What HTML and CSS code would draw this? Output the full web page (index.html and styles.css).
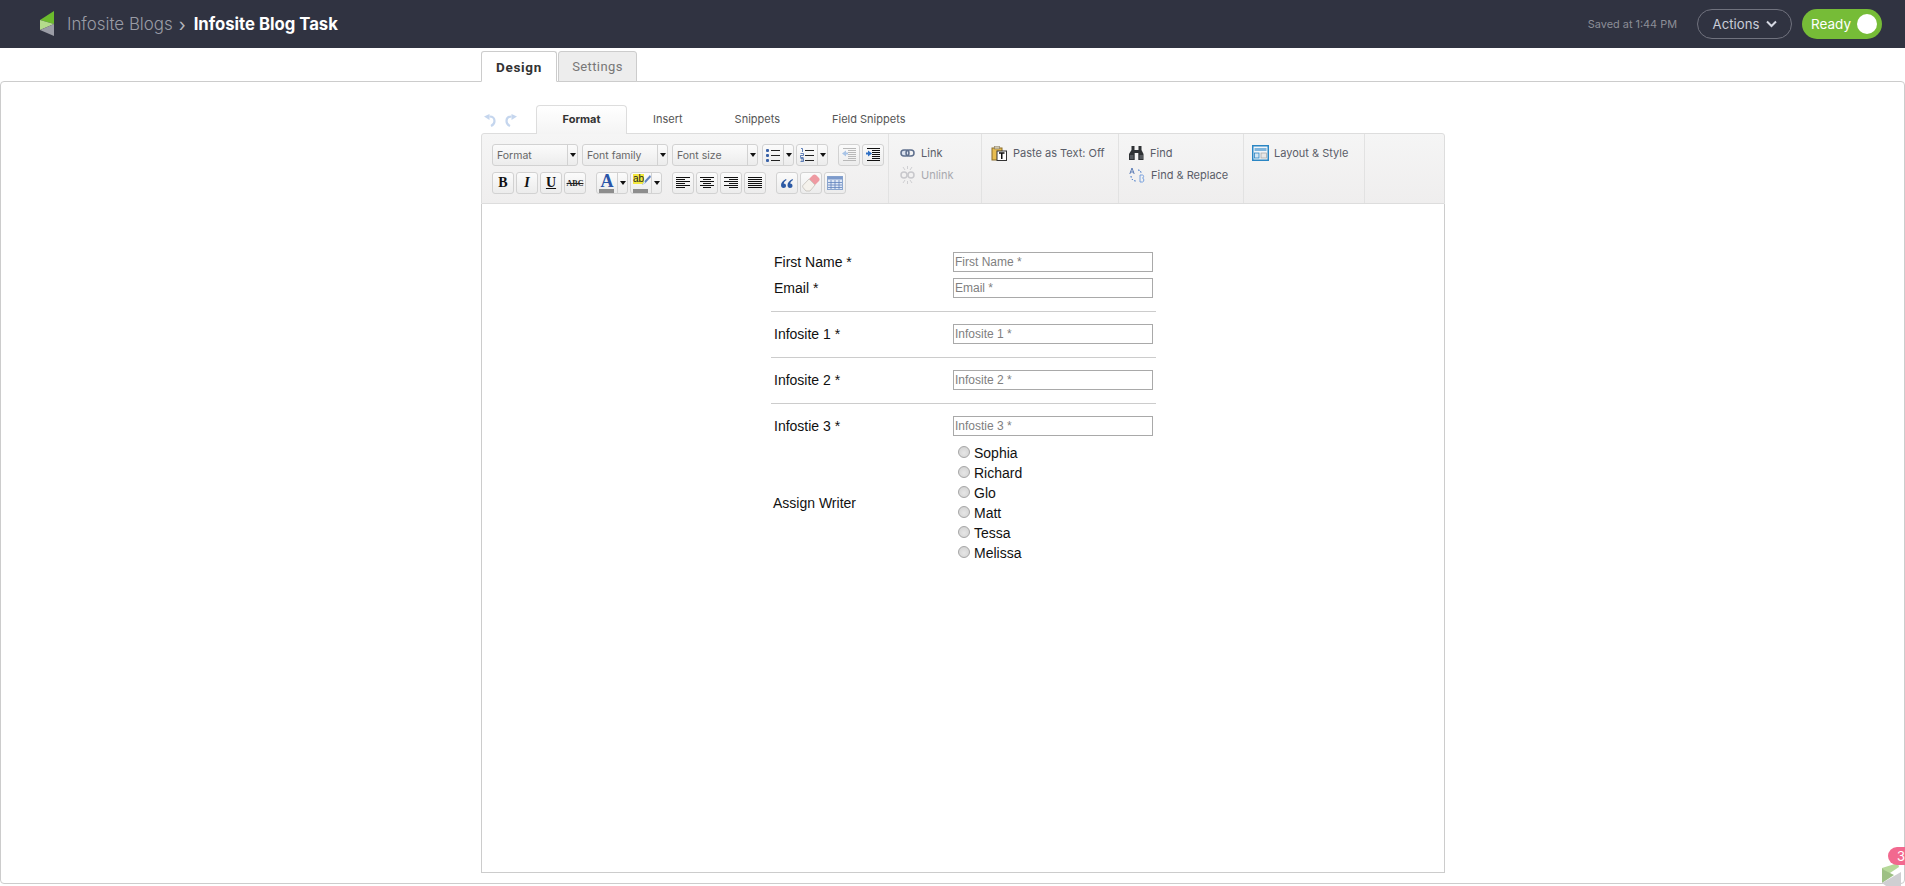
FILE: index.html
```html
<!DOCTYPE html>
<html lang="en">
<head>
<meta charset="utf-8">
<title>Infosite Blog Task</title>
<link rel="stylesheet" href="styles.css">
</head>
<body>
<header class="topbar">
  <svg class="logo" width="15" height="26" viewBox="0 0 15 26"><polygon points="14,0 14,13 0,9" fill="#6cbb2d"/><polygon points="0,9 14,13 0,19" fill="#b4dc8c"/><polygon points="0,19 14,13 14,25" fill="#9b9da6"/></svg>
  <span class="crumb">Infosite Blogs</span>
  <span class="crumb-sep">›</span>
  <span class="crumb-title">Infosite Blog Task</span>
  <span class="saved">Saved at 1:44 PM</span>
  <button class="actions">Actions
    <svg width="11" height="8" viewBox="0 0 11 8"><path d="M1 1.500l4.500 4.500L10 1.500" fill="none" stroke="#d5d8e2" stroke-width="2"/></svg>
  </button>
  <div class="ready"><span>Ready</span><i class="ready-knob"></i></div>
</header>

<nav class="page-tabs">
  <div class="page-tab active">Design</div>
  <div class="page-tab">Settings</div>
</nav>

<main class="frame">
  <div class="editor-wrap">
    <div class="ribbon-tabs">
      <div class="history">
        <svg width="13" height="13" viewBox="0 0 13 13"><path d="M6.500 2.500C9.500 2.500 11.500 4.300 11.500 7c0 2.200-1.400 4-3.500 5" fill="none" stroke="#c5d6ee" stroke-width="2.200"/><path d="M1 2.500L6.500 0v6z" fill="#c5d6ee"/></svg>
        <svg width="13" height="13" viewBox="0 0 13 13"><path d="M6.500 2.500C3.500 2.500 1.500 4.300 1.500 7c0 2.200 1.400 4 3.500 5" fill="none" stroke="#c5d6ee" stroke-width="2.200"/><path d="M12 2.500L6.500 0v6z" fill="#c5d6ee"/></svg>
      </div>
      <div class="ribbon-tab active">Format</div>
      <div class="ribbon-tab insert">Insert</div>
      <div class="ribbon-tab snippets">Snippets</div>
      <div class="ribbon-tab fields">Field Snippets</div>
    </div>

    <div class="toolbar">
      <section class="tb-group tb-format">
        <div class="tb-row">
          <div class="tb-select"><span>Format</span><i class="tb-drop"><b class="caret"></b></i></div>
          <div class="tb-select"><span>Font family</span><i class="tb-drop"><b class="caret"></b></i></div>
          <div class="tb-select"><span>Font size</span><i class="tb-drop"><b class="caret"></b></i></div>
          <div class="tb-split">
            <i class="tb-main"><svg width="14" height="14" viewBox="0 0 14 14"><g fill="#3a62a8"><rect x="0" y="1" width="3" height="3" rx="1"/><rect x="0" y="6" width="3" height="3" rx="1"/><rect x="0" y="11" width="3" height="3" rx="1"/></g><path d="M5 2.500h9M5 7.500h9M5 12.500h9" stroke="#222"/></svg></i>
            <i class="tb-drop"><b class="caret"></b></i>
          </div>
          <div class="tb-split">
            <i class="tb-main"><svg width="14" height="14" viewBox="0 0 14 14"><path d="M1 .5h1.500V4M.5 5.500h3v2h-3v2h3M.5 10.500h3v3h-3M1 12h2" fill="none" stroke="#3a62a8" stroke-width=".8"/><path d="M5 2.500h9M5 7.500h9M5 12.500h9" stroke="#222"/></svg></i>
            <i class="tb-drop"><b class="caret"></b></i>
          </div>
          <div class="tb-btn gap"><svg width="14" height="14" viewBox="0 0 14 14"><path d="M1 .5h13M6 2.500h8M6 4.500h8M6 6.500h8M6 8.500h8M6 10.500h8M1 12.500h13" stroke="#b8b8b8"/><path d="M0 5.500L4 2.500v2h2v2H4v2z" fill="#a9c4e6"/></svg></div>
          <div class="tb-btn"><svg width="14" height="14" viewBox="0 0 14 14"><path d="M1 .5h13M6 2.500h8M6 4.500h8M6 6.500h8M6 8.500h8M6 10.500h8M1 12.500h13" stroke="#111"/><path d="M6 5.500L2 2.500v2H0v2h2v2z" fill="#2f6fc4"/></svg></div>
        </div>
        <div class="tb-row">
          <div class="tb-btn glyph-b">B</div>
          <div class="tb-btn glyph-i">I</div>
          <div class="tb-btn glyph-u">U</div>
          <div class="tb-btn glyph-s">ABC</div>
          <div class="tb-split gap">
            <i class="tb-main color"><span class="glyph-a">A</span><u class="swatch"></u></i>
            <i class="tb-drop"><b class="caret"></b></i>
          </div>
          <div class="tb-split">
            <i class="tb-main color"><span class="glyph-h">ab</span><svg class="pen" width="10" height="12" viewBox="0 0 10 12"><path d="M9 1L3.500 7 1 11l3.500-2L10 3z" fill="#5f84c2"/><path d="M3.500 7L1 11l3.500-2z" fill="#d9e4f3"/></svg><u class="swatch"></u></i>
            <i class="tb-drop"><b class="caret"></b></i>
          </div>
          <div class="tb-btn gap"><svg width="14" height="12" viewBox="0 0 14 12"><path d="M0 .5h14M0 2.500h9M0 4.500h14M0 6.500h9M0 8.500h14M0 10.500h9" stroke="#111"/></svg></div>
          <div class="tb-btn"><svg width="14" height="12" viewBox="0 0 14 12"><path d="M0 .5h14M3 2.500h8M0 4.500h14M3 6.500h8M0 8.500h14M3 10.500h8" stroke="#111"/></svg></div>
          <div class="tb-btn"><svg width="14" height="12" viewBox="0 0 14 12"><path d="M0 .5h14M5 2.500h9M0 4.500h14M5 6.500h9M0 8.500h14M5 10.500h9" stroke="#111"/></svg></div>
          <div class="tb-btn"><svg width="14" height="12" viewBox="0 0 14 12"><path d="M0 .5h14M0 2.500h14M0 4.500h14M0 6.500h14M0 8.500h14M0 10.500h14" stroke="#111"/></svg></div>
          <div class="tb-btn gap"><svg width="12" height="9" viewBox="0 0 12 9"><path d="M5 0C2 1.500 0 3.500 0 6c0 1.700 1 3 2.500 3S5 8 5 6.700 4 4.500 2.700 4.500C3 3 4 1.800 5.500 1zM11.500 0C8.500 1.500 6.500 3.500 6.500 6c0 1.700 1 3 2.500 3s2.500-1 2.500-2.300S10.500 4.500 9.200 4.500C9.500 3 10.500 1.800 12 1z" fill="#2c5aa5"/></svg></div>
          <div class="tb-btn"><svg width="18" height="18" viewBox="0 0 18 18"><path d="M11 1c1-.8 2-.8 3 0l3 3c.8 1 .8 2 0 3l-4 4-6-6z" fill="#ee9aa2"/><path d="M7 5l6 6-5 6H4L1 13.500c-.5-.8-.5-1.500 0-2.200z" fill="#f5f2ec" stroke="#bdb9b2" stroke-width=".7"/></svg></div>
          <div class="tb-btn"><svg width="16" height="14" viewBox="0 0 16 14"><rect x=".5" y=".5" width="15" height="13" fill="#dfe8f6" stroke="#8ba6cf"/><rect x=".5" y=".5" width="15" height="3" fill="#7d9acb"/><path d="M4 4v9M8 4v9M12 4v9M1 6.500h14M1 9h14M1 11.500h14" stroke="#5f82bd" stroke-width=".8"/></svg></div>
        </div>
      </section>

      <section class="tb-group tb-links">
        <div class="tb-item">
          <svg width="15" height="8" viewBox="0 0 15 8"><rect x="1" y="1" width="8" height="6" rx="3" fill="#dbe2ee" stroke="#5e6f8d" stroke-width="1.500"/><rect x="6" y="1" width="8" height="6" rx="3" fill="none" stroke="#5e6f8d" stroke-width="1.500"/></svg>
          <span>Link</span>
        </div>
        <div class="tb-item off">
          <svg width="15" height="18" viewBox="0 0 15 18"><rect x="1" y="6" width="6" height="6" rx="3" fill="none" stroke="#c8c8cc" stroke-width="1.500"/><rect x="8" y="6" width="6" height="6" rx="3" fill="none" stroke="#c8c8cc" stroke-width="1.500"/><path d="M3 1l2 3M12 1l-2 3M7.500 0v3M3 17l2-3M12 17l-2-3M7.500 18v-3" stroke="#cfcfd2"/></svg>
          <span>Unlink</span>
        </div>
      </section>

      <section class="tb-group tb-paste">
        <div class="tb-item">
          <svg width="16" height="15" viewBox="0 0 16 15"><rect x="1" y="2" width="10" height="12" fill="#e8bd50" stroke="#8a6d2a"/><rect x="3.500" y="0" width="5" height="3" fill="#cfc6ad" stroke="#807560" stroke-width=".6"/><rect x="6" y="5" width="9.500" height="9.500" fill="#fff" stroke="#333"/><path d="M8 7h5.500M10.750 7v6" stroke="#111" stroke-width="1.500"/></svg>
          <span>Paste as Text: Off</span>
        </div>
      </section>

      <section class="tb-group tb-find">
        <div class="tb-item">
          <svg width="15" height="16" viewBox="0 0 15 16"><path d="M2.500 1h3v4h4V1h3v4l2 4v6H9.300V8H5.700v7H0V9l2.500-4z" fill="#2f3235"/><path d="M1 10h3.500v4H1zM10.500 10H14v4h-3.500z" fill="#55595e"/></svg>
          <span>Find</span>
        </div>
        <div class="tb-item">
          <svg width="16" height="16" viewBox="0 0 16 16"><path d="M3 1L.8 7M3 1l2.200 6M1.500 5h3" stroke="#3a62a8" stroke-width=".8" fill="none"/><path d="M2 9c0 3 2 5 5 5M9 3c2 0 3 1 3 3" fill="none" stroke="#3d74c7" stroke-dasharray="1.500 1.500"/><path d="M11 8h2.500c1.500 0 1.500 3 0 3 1.800 0 1.800 4 0 4H11z" fill="none" stroke="#6b98dc" stroke-width=".9"/></svg>
          <span>Find &amp; Replace</span>
        </div>
      </section>

      <section class="tb-group tb-layout">
        <div class="tb-item">
          <svg width="17" height="16" viewBox="0 0 17 16"><rect x=".75" y=".75" width="15.500" height="14.500" fill="#f2f5f8" stroke="#2a86c4" stroke-width="1.500"/><rect x="2.500" y="3" width="12" height="3" fill="#7fb5dd"/><rect x="2.500" y="8" width="4.500" height="5" fill="#d3e5f3" stroke="#2a86c4" stroke-width=".8"/><rect x="9" y="8" width="5.500" height="5" fill="#e6e6e6" stroke="#aaa" stroke-width=".8"/></svg>
          <span>Layout &amp; Style</span>
        </div>
      </section>
    </div>

    <div class="editor">
      <form class="blog-form">
        <div class="form-row"><label>First Name *</label><input placeholder="First Name *"></div>
        <div class="form-row tight"><label>Email *</label><input placeholder="Email *"></div>
        <hr>
        <div class="form-row"><label>Infosite 1 *</label><input placeholder="Infosite 1 *"></div>
        <hr>
        <div class="form-row"><label>Infosite 2 *</label><input placeholder="Infosite 2 *"></div>
        <hr>
        <div class="form-row"><label>Infostie 3 *</label><input placeholder="Infostie 3 *"></div>
        <div class="form-row radios">
          <label class="nudge">Assign Writer</label>
          <div class="radio-list">
            <div class="radio"><input type="radio" name="writer"><span>Sophia</span></div>
            <div class="radio"><input type="radio" name="writer"><span>Richard</span></div>
            <div class="radio"><input type="radio" name="writer"><span>Glo</span></div>
            <div class="radio"><input type="radio" name="writer"><span>Matt</span></div>
            <div class="radio"><input type="radio" name="writer"><span>Tessa</span></div>
            <div class="radio"><input type="radio" name="writer"><span>Melissa</span></div>
          </div>
        </div>
      </form>
    </div>
  </div>
</main>

<div class="helper">
  <svg class="helper-logo" width="20" height="24" viewBox="0 0 20 24"><polygon points="0,6 16,1 17,5 2,15" fill="#b6d99a"/><polygon points="0,6 0,21 12,13 2,8" fill="#9dc084"/><polygon points="0,21 19,10 19,24 4,24" fill="#cfcfd2"/></svg>
  <div class="helper-badge">3</div>
</div>
</body>
</html>
```

FILE: styles.css
```css
* { box-sizing: border-box; }
html, body { margin: 0; height: 886px; overflow: hidden; background: #fff; }
body { font-family: "Inter", "Liberation Sans", sans-serif; color: #222; position: relative; }
button { font: inherit; }
i, u, b { font-style: normal; text-decoration: none; }

/* top bar */
.topbar { height: 48px; background: #303341; display: flex; align-items: center; padding: 0 23px 0 40px; }
.logo { margin-right: 12px; flex: none; }
.crumb { font-size: 16.900px; font-weight: 300; color: #9a9ca5; }
.crumb-sep { font-size: 18px; color: #b5b7bd; margin: 0 8px 0 6px; }
.crumb-title { font-size: 16.700px; font-weight: 700; color: #fff; }
.saved { margin-left: auto; font-size: 10.900px; color: #8c8e97; }
.actions { margin-left: 20px; width: 95px; height: 30px; border-radius: 15px; border: 1px solid #70727e; background: transparent; color: #c9ccd8; font-size: 13.200px; display: flex; align-items: center; justify-content: center; gap: 7px; padding: 0 0 0 1px; }
.ready { margin-left: 10px; width: 80px; height: 30px; border-radius: 15px; background: #76bc37; color: #fff; font-size: 13.500px; display: flex; align-items: center; justify-content: space-between; padding: 0 5px 0 9px; }
.ready-knob { width: 20px; height: 20px; border-radius: 50%; background: #fff; }

/* page tabs */
.page-tabs { display: flex; gap: 1px; height: 34px; padding: 3px 0 0 481px; position: relative; z-index: 1; margin-bottom: -1px; }
.page-tab { width: 79px; height: 31px; border: 1px solid #ccc; border-radius: 3px 3px 0 0; background: #ededed; font: 13px "Roboto", sans-serif; letter-spacing: .4px; color: #777; display: flex; align-items: center; justify-content: center; }
.page-tab.active { width: 76px; background: #fff; border-bottom-color: #fff; color: #333; font-weight: 700; font-size: 13.500px; letter-spacing: .7px; height: 31px; }

/* frame */
.frame { height: 803px; border: 1px solid #ccc; border-radius: 4px; padding-left: 480px; }
.editor-wrap { width: 964px; }
.ribbon-tabs { height: 52px; display: flex; align-items: flex-end; font-size: 11px; color: #555; position: relative; z-index: 1; margin-bottom: -1px; }
.history { width: 55px; height: 28px; display: flex; align-items: center; gap: 9px; padding-left: 2px; }
.ribbon-tab { height: 28px; display: flex; align-items: center; padding-bottom: 3px; }
.ribbon-tab.active { width: 91px; height: 29px; justify-content: center; background: linear-gradient(#fff, #f4f4f4); border: 1px solid #ddd; border-bottom: 0; border-radius: 4px 4px 0 0; font-weight: 700; color: #333; }
.insert { margin-left: 26px; }
.snippets { margin-left: 52px; }
.fields { margin-left: 52px; }

/* toolbar */
.toolbar { height: 71px; display: flex; background: linear-gradient(#f5f5f5, #efeeee); border: 1px solid #ddd; border-radius: 3px 3px 0 0; font-size: 11px; color: #5a5d68; }
.tb-group { border-right: 1px solid #e2e2e2; flex: none; padding-top: 8px; }
.tb-format { width: 407px; padding: 10px 0 0 10px; }
.tb-links { width: 93px; padding-left: 11px; }
.tb-paste { width: 137px; padding-left: 9px; }
.tb-find { width: 125px; padding-left: 10px; }
.tb-layout { width: 121px; padding-left: 8px; }
.tb-layout .tb-item { gap: 5px; }
.tb-row { display: flex; height: 22px; margin-bottom: 6px; gap: 2px; }
.tb-select, .tb-split, .tb-btn { height: 22px; border: 1px solid #d2d2d2; border-radius: 3px; background: linear-gradient(#fbfbfb, #ececec); display: flex; align-items: center; flex: none; }
.tb-select { width: 86px; margin-right: 2px; }
.tb-select span { flex: 1; padding-left: 4px; color: #666; font-size: 10.500px; }
.tb-drop { width: 10px; height: 100%; border-left: 1px solid #d2d2d2; display: flex; align-items: center; justify-content: center; flex: none; }
.caret { border: 3px solid transparent; border-top: 4px solid #111; border-bottom: 0; }
.tb-split { width: 32px; }
.tb-main { flex: 1; height: 100%; display: flex; align-items: center; justify-content: center; position: relative; }
.tb-btn { width: 22px; justify-content: center; }
.gap { margin-left: 8px; }
.glyph-b, .glyph-i, .glyph-u, .glyph-a { font-family: "Liberation Serif", serif; font-weight: 700; color: #111; font-size: 14px; }
.glyph-i { font-style: italic; }
.glyph-u { text-decoration: underline; }
.glyph-s { font-family: "Liberation Serif", serif; font-size: 8px; font-weight: 700; color: #222; text-decoration: line-through; }
.color { padding-bottom: 4px; }
.glyph-a { color: #2a55a8; font-size: 18px; line-height: 16px; }
.glyph-h { background: #f3e83f; color: #222; font: 10px/10px "Liberation Sans", sans-serif; position: absolute; left: 2px; top: 1px; }
.pen { position: absolute; left: 10px; top: 1px; }
.swatch { position: absolute; left: 2px; right: 3px; bottom: 0; height: 4px; background: #8d8d8d; }

.tb-item { display: flex; align-items: center; height: 22px; gap: 6px; }
.tb-item svg { flex: none; }
.off { color: #a8a9af; }

/* editor */
.editor { height: 669px; border: 1px solid #ccc; border-top: 0; padding: 48px 0 0 289px; font: 14px "Liberation Sans", Arial, sans-serif; color: #111; }
.blog-form { width: 385px; }
.blog-form hr { border: 0; border-top: 1px solid #ccc; margin: 13px 0 12px; height: 0; }
.form-row { display: flex; align-items: center; }
.form-row.tight { margin-top: 6px; }
.form-row label { width: 182px; padding-left: 3px; flex: none; }
.form-row .nudge { padding-left: 2px; }
.form-row > input { width: 200px; height: 20px; border: 1px solid #a9a9a9; padding: 0 1px; font: 12px "Liberation Sans", Arial, sans-serif; background: #fff; border-radius: 0; outline: 0; }
.form-row > input::placeholder { color: #808080; opacity: 1; }
.radios { margin-top: 7px; }
.radio-list { padding-left: 5px; }
.radio { height: 20px; display: flex; align-items: center; gap: 4px; }
.radio input { appearance: none; width: 12px; height: 12px; margin: -3px 0 0; border-radius: 50%; border: 1px solid #a5a5a5; background: radial-gradient(circle at 50% 60%, #e6e6e6, #cfcfcf); flex: none; }

/* helper widget */
.helper { position: absolute; left: 1882px; top: 847px; width: 23px; height: 39px; overflow: hidden; }
.helper-logo { position: absolute; left: 0; top: 15px; }
.helper-badge { position: absolute; left: 6px; top: 0; width: 30px; height: 18px; border-radius: 9px; background: #f2698f; color: #fff; font-size: 13px; line-height: 18px; padding-left: 9px; }
```
